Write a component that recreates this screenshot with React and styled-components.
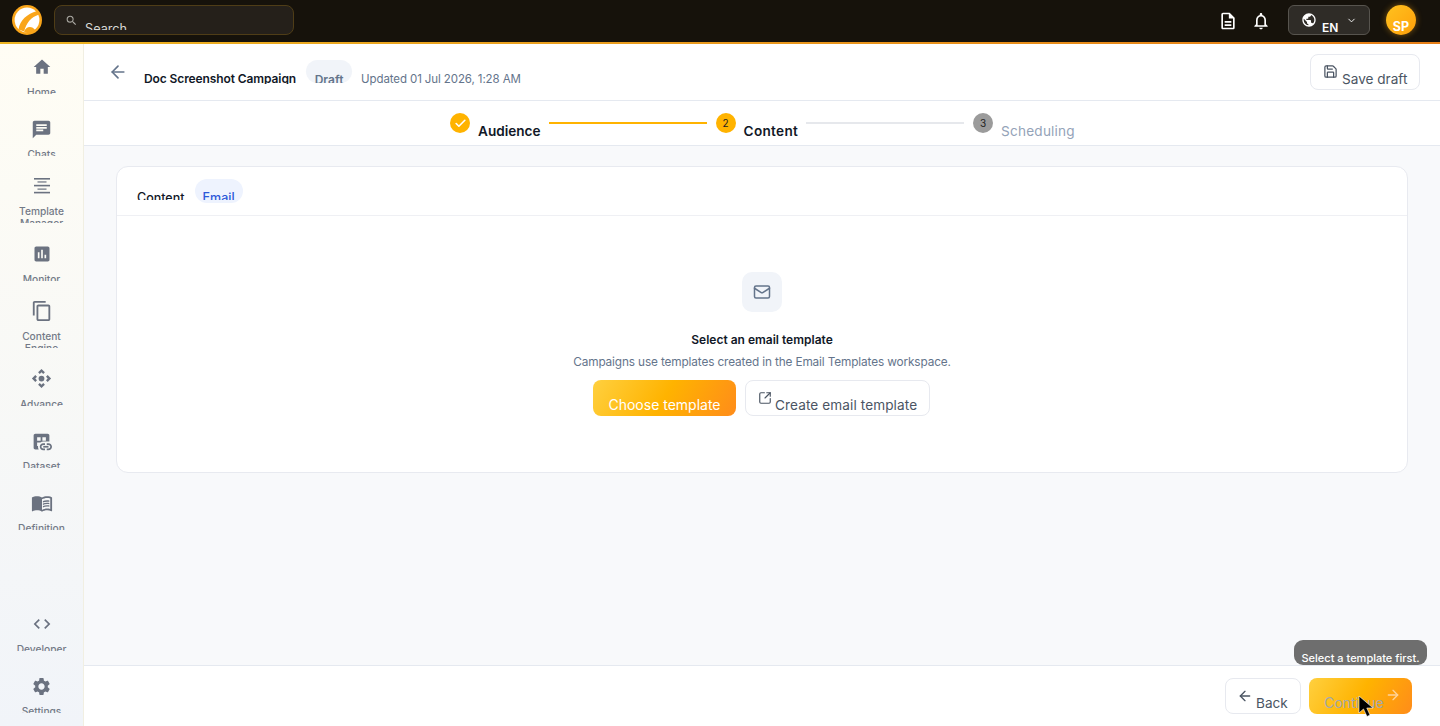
import styled, { createGlobalStyle } from 'styled-components'
import { ArrowLeft, ArrowRight, Check, ChevronDown, Mail, Save, SquareArrowOutUpRight } from 'lucide-react'
import {
  MdHome,
  MdChat,
  MdInsertChart,
  MdOutlineContentCopy,
  MdControlCamera,
  MdDatasetLinked,
  MdMenuBook,
  MdCode,
  MdSearch,
  MdSettings,
  MdOutlineDescription,
  MdOutlineNotifications,
  MdPublic
} from 'react-icons/md'

const GlobalStyle = createGlobalStyle`
  html, body {
    margin: 0;
    height: 100%;
    overflow: hidden;
    font-family: Inter, "Noto Sans", sans-serif;
    color: #111827;
    background: #f8f9fb;
  }
  * {
    box-sizing: border-box;
  }
`

const Page = styled.div`
  width: 1440px;
  height: 726px;
  display: flex;
  flex-direction: column;
  position: relative;
  overflow: hidden;
`

const TopBar = styled.header`
  height: 44px;
  flex: none;
  display: flex;
  align-items: center;
  padding: 0 24px 2px 12px;
  background: #16120b;
  border-bottom: 2px solid;
  border-image: linear-gradient(90deg, #ecb422, #e67e17) 1;
`

const LogoMark = styled.svg`
  width: 30px;
  height: 30px;
  flex: none;
`

const SearchBox = styled.div`
  width: 240px;
  height: 30px;
  margin-left: 12px;
  padding: 0 0 0 10px;
  display: flex;
  gap: 7px;
  overflow: hidden;
  border: 1px solid #4f3d17;
  border-radius: 8px;
  background: #25201a;
  color: #a8a6a0;
  svg {
    margin-top: 8px;
    flex: none;
  }
`

const SearchText = styled.span`
  height: 9px;
  margin-top: 15px;
  overflow: hidden;
  font-size: 12.7px;
  line-height: 16px;
  color: #d8d8d6;
`

const TopActions = styled.div`
  margin-left: auto;
  display: flex;
  align-items: center;
  color: #fff;
`

const TopIcon = styled.span`
  display: flex;
  width: 20px;
  margin: 1px 13px 0 0;
  justify-content: center;
`

const LangButton = styled.div`
  width: 82px;
  height: 30px;
  margin-left: 4px;
  padding: 6px 0 0 12px;
  display: flex;
  border: 1px solid #57544e;
  border-radius: 6px;
  background: #2f2c27;
  overflow: hidden;
`

const LangText = styled.span`
  margin: 8px 0 0 5px;
  font-size: 12px;
  font-weight: 600;
  line-height: 16px;
`

const LangCaret = styled(ChevronDown)`
  margin: 3px 0 0 8px;
`

const Avatar = styled.div`
  width: 30px;
  height: 30px;
  margin-left: 16px;
  padding-top: 14px;
  border-radius: 50%;
  text-align: center;
  font-size: 12.5px;
  font-weight: 700;
  line-height: 16px;
  background: linear-gradient(135deg, #ffc21f, #ff9f0a);
  box-shadow: 0 0 6px rgba(255, 170, 20, 0.45);
`

const Body = styled.div`
  flex: 1;
  min-height: 0;
  display: flex;
`

const Sidebar = styled.nav`
  width: 84px;
  flex: none;
  display: flex;
  flex-direction: column;
  justify-content: space-between;
  border-right: 1px solid #f1efe2;
  background: linear-gradient(180deg, #fffdf4, #f1f4f9);
`

const NavGroup = styled.div`
  display: flex;
  flex-direction: column;
`

const NavItem = styled.div`
  height: 62.4px;
  display: flex;
  flex-direction: column;
  align-items: center;
  justify-content: center;
  gap: 7px;
  color: #6b7280;
`

const NavIcon = styled.span`
  height: 24px;
  flex: none;
  display: flex;
  align-items: center;
  justify-content: center;
`

const NavLabel = styled.span`
  width: 64px;
  height: ${p => (p.$double ? '18px' : '8px')};
  margin-bottom: ${p => (p.$double ? '3px' : '2px')};
  overflow: hidden;
  text-align: center;
  font-size: 10.2px;
  font-weight: 500;
  color: #737a87;
  line-height: ${p => (p.$double ? '12px' : '12.5px')};
`

const Main = styled.main`
  flex: 1;
  min-width: 0;
  display: flex;
  flex-direction: column;
`

const PageHeader = styled.div`
  height: 57px;
  flex: none;
  padding: 10px 20px 0 24px;
  display: flex;
  background: #fff;
  border-bottom: 1px solid #e5e9f0;
`

const BackArrow = styled(ArrowLeft)`
  margin-top: 8px;
  color: #64748b;
`

const CampaignName = styled.span`
  margin: 16px 0 0 16px;
  height: 14px;
  overflow: hidden;
  font-size: 12px;
  font-weight: 600;
  letter-spacing: -0.1px;
  line-height: 17px;
  color: #111827;
`

const Status = styled.span`
  width: 46px;
  height: 23px;
  margin: 6px 0 0 10px;
  padding-top: 12px;
  overflow: hidden;
  text-align: center;
  border-radius: 12px;
  background: #f1f4f9;
  font-size: 12px;
  font-weight: 600;
  line-height: 16px;
  color: #64748b;
`

const Updated = styled.span`
  margin: 17px 0 0 9px;
  font-size: 11.5px;
  letter-spacing: -0.1px;
  line-height: 16px;
  color: #64748b;
`

const OutlineButton = styled.div`
  height: 36px;
  flex: none;
  display: flex;
  background: #fff;
  border: 1px solid #e7e9ef;
  border-radius: 8px;
  font-size: 13.6px;
  line-height: 18px;
  color: #4b5563;
  overflow: hidden;
`

const SaveButton = styled(OutlineButton)`
  width: 110px;
  margin-left: auto;
  padding: 9px 0 0 12px;
  gap: 4px;
`

const ButtonText = styled.span`
  margin-top: ${p => p.$top || 6}px;
  letter-spacing: ${p => p.$spacing || 0}px;
  white-space: nowrap;
`

const Stepper = styled.div`
  height: 45px;
  flex: none;
  padding: 12px 0 0 366px;
  display: flex;
  background: #fff;
  border-bottom: 1px solid #e5e9f0;
`

const StepDot = styled.span`
  width: 20px;
  height: 20px;
  flex: none;
  display: flex;
  align-items: center;
  justify-content: center;
  border-radius: 50%;
  background: ${p => p.$color};
  font-size: 10px;
  color: #222;
`

const StepLabel = styled.span`
  margin: 9px 8px 0;
  font-size: 13.6px;
  font-weight: ${p => (p.$muted ? 400 : 600)};
  letter-spacing: ${p => p.$spacing || 0}px;
  line-height: 18px;
  color: ${p => (p.$muted ? '#94a3b8' : '#111827')};
`

const StepLine = styled.span`
  width: 158px;
  height: 2px;
  margin: 9px 9px 0 0;
  background: ${p => p.$color};
`

const Content = styled.div`
  flex: 1;
  min-height: 0;
  padding: 20px 32px 0;
  background: #f8f9fb;
`

const Card = styled.section`
  height: 307px;
  background: #fff;
  border: 1px solid #e8eaf0;
  border-radius: 12px;
  overflow: hidden;
`

const TabRow = styled.div`
  height: 49px;
  padding: 12px 0 0 20px;
  display: flex;
  gap: 10px;
  border-bottom: 1px solid #eff0f4;
`

const Tab = styled.span`
  height: 24px;
  padding: 11px ${p => (p.$active ? 8 : 0)}px 0;
  border-radius: 12px;
  background: ${p => (p.$active ? '#eef3fe' : 'transparent')};
`

const TabText = styled.span`
  display: block;
  height: 10px;
  overflow: hidden;
  font-size: 12.5px;
  font-weight: 500;
  line-height: 16px;
  color: ${p => (p.$active ? '#2b59d9' : '#111827')};
`

const EmptyState = styled.div`
  padding-top: 56px;
  display: flex;
  flex-direction: column;
  align-items: center;
`

const MailBox = styled.div`
  width: 40px;
  height: 40px;
  display: flex;
  align-items: center;
  justify-content: center;
  border-radius: 10px;
  background: #f1f4f9;
  color: #64748b;
`

const EmptyTitle = styled.div`
  margin-top: 20px;
  font-size: 12px;
  font-weight: 600;
  line-height: 16px;
  color: #111827;
`

const EmptyText = styled.div`
  margin-top: 6px;
  font-size: 11.8px;
  letter-spacing: -0.13px;
  line-height: 16px;
  color: #64748b;
`

const EmptyActions = styled.div`
  margin: 10px 1px 0 0;
  display: flex;
  gap: 9px;
`

const GradientButton = styled.div`
  height: 36px;
  flex: none;
  display: flex;
  border-radius: 8px;
  background: linear-gradient(120deg, #ffd03f, #ffb300 50%, #ff8c1a);
  font-size: 14px;
  line-height: 18px;
  color: ${p => (p.$disabled ? '#a3a8ad' : '#fff')};
  overflow: hidden;
`

const ChooseButton = styled(GradientButton)`
  width: 143px;
  justify-content: center;
`

const CreateButton = styled(OutlineButton)`
  width: 185px;
  padding: 10px 0 0 12px;
  gap: 3px;
`

const Footer = styled.footer`
  height: 61px;
  flex: none;
  padding: 12px 28px 0 0;
  display: flex;
  justify-content: flex-end;
  gap: 8px;
  background: #fff;
  border-top: 1px solid #e5e9f0;
`

const BackButton = styled(OutlineButton)`
  width: 76px;
  padding: 9px 0 0 11px;
  gap: 3px;
`

const ContinueButton = styled(GradientButton)`
  width: 103px;
  padding: 9px 0 0 15px;
  gap: 1px;
  svg {
    color: #ffd39a;
  }
`

const Tooltip = styled.div`
  position: absolute;
  left: 1294px;
  top: 640px;
  width: 133px;
  height: 25px;
  padding-top: 11px;
  overflow: hidden;
  text-align: center;
  border-radius: 9px;
  background: #6e6e6e;
  font-size: 11px;
  font-weight: 500;
  line-height: 14px;
  color: #fff;
`

const Cursor = styled.svg`
  position: absolute;
  left: 1358px;
  top: 695px;
  width: 18px;
  height: 24px;
`

const Logo = () => (
  <LogoMark viewBox="0 0 30 30">
    <circle cx="15" cy="15" r="15" fill="#f9a51a" />
    <circle cx="15" cy="15" r="12.4" fill="#fff" />
    <path d="M6.5 24.5C8 15 15 9 25 6l2 3.4C19 12 14 18 12.2 26.5z" fill="#f9a51a" />
    <path d="M12 27c2-6 8-6.5 11.5-1.5-3.500 2.800-8 3.500-11.500 1.500z" fill="#f9a51a" />
  </LogoMark>
)

const TemplateIcon = () => (
  <svg width="20" height="20" viewBox="0 0 20 20" fill="currentColor">
    <rect x="2" y="2" width="16" height="1.600" />
    <rect x="5.500" y="5.200" width="9" height="1.500" opacity="0.8" />
    <rect x="2" y="8.800" width="16" height="1.600" />
    <rect x="5.500" y="12.400" width="9" height="1.500" opacity="0.8" />
    <rect x="2" y="15.800" width="16" height="1.600" />
  </svg>
)

const topNav = [
  { icon: <MdHome size={20} />, label: 'Home' },
  { icon: <MdChat size={21} />, label: 'Chats' },
  { icon: <TemplateIcon />, label: 'Template Manager', double: true },
  { icon: <MdInsertChart size={20} />, label: 'Monitor' },
  { icon: <MdOutlineContentCopy size={22} />, label: 'Content Engine', double: true },
  { icon: <MdControlCamera size={23} />, label: 'Advance' },
  { icon: <MdDatasetLinked size={21} />, label: 'Dataset' },
  { icon: <MdMenuBook size={22} />, label: 'Definition' }
]

const bottomNav = [
  { icon: <MdCode size={20} />, label: 'Developer' },
  { icon: <MdSettings size={21} />, label: 'Settings' }
]

const renderNav = items =>
  items.map(item => (
    <NavItem key={item.label}>
      <NavIcon>{item.icon}</NavIcon>
      <NavLabel $double={item.double}>{item.label}</NavLabel>
    </NavItem>
  ))

const App = () => {
  return (
    <Page>
      <GlobalStyle />
      <TopBar>
        <Logo />
        <SearchBox>
          <MdSearch size={13} />
          <SearchText>Search</SearchText>
        </SearchBox>
        <TopActions>
          <TopIcon>
            <MdOutlineDescription size={20} />
          </TopIcon>
          <TopIcon>
            <MdOutlineNotifications size={22} />
          </TopIcon>
          <LangButton>
            <MdPublic size={16} />
            <LangText>EN</LangText>
            <LangCaret size={11} />
          </LangButton>
          <Avatar>SP</Avatar>
        </TopActions>
      </TopBar>
      <Body>
        <Sidebar>
          <NavGroup>{renderNav(topNav)}</NavGroup>
          <NavGroup>{renderNav(bottomNav)}</NavGroup>
        </Sidebar>
        <Main>
          <PageHeader>
            <BackArrow size={20} />
            <CampaignName>Doc Screenshot Campaign</CampaignName>
            <Status>Draft</Status>
            <Updated>Updated 01 Jul 2026, 1:28 AM</Updated>
            <SaveButton>
              <Save size={15} />
              <ButtonText>Save draft</ButtonText>
            </SaveButton>
          </PageHeader>
          <Stepper>
            <StepDot $color="#ffb300">
              <Check size={13} color="#fff" strokeWidth={3} />
            </StepDot>
            <StepLabel>Audience</StepLabel>
            <StepLine $color="#ffb300" />
            <StepDot $color="#ffb300">2</StepDot>
            <StepLabel $spacing={0.3}>Content</StepLabel>
            <StepLine $color="#e6e8ec" />
            <StepDot $color="#9b9b9b">3</StepDot>
            <StepLabel $muted $spacing={0.2}>Scheduling</StepLabel>
          </Stepper>
          <Content>
            <Card>
              <TabRow>
                <Tab>
                  <TabText>Content</TabText>
                </Tab>
                <Tab $active>
                  <TabText $active>Email</TabText>
                </Tab>
              </TabRow>
              <EmptyState>
                <MailBox>
                  <Mail size={18} />
                </MailBox>
                <EmptyTitle>Select an email template</EmptyTitle>
                <EmptyText>Campaigns use templates created in the Email Templates workspace.</EmptyText>
                <EmptyActions>
                  <ChooseButton>
                    <ButtonText $top={16}>Choose template</ButtonText>
                  </ChooseButton>
                  <CreateButton>
                    <SquareArrowOutUpRight size={14} />
                    <ButtonText $top={5} $spacing={0.1}>Create email template</ButtonText>
                  </CreateButton>
                </EmptyActions>
              </EmptyState>
            </Card>
          </Content>
          <Footer>
            <BackButton>
              <ArrowLeft size={16} />
              <ButtonText>Back</ButtonText>
            </BackButton>
            <ContinueButton $disabled>
              <ButtonText $top={7}>Continue</ButtonText>
              <ArrowRight size={16} />
            </ContinueButton>
          </Footer>
        </Main>
      </Body>
      <Tooltip>Select a template first.</Tooltip>
      <Cursor viewBox="0 0 18 24">
        <path d="M1 1v17l4.500-4 3.500 7.500 3-1.500-3.200-7H15z" fill="#000" stroke="#fff" strokeWidth="0.6" />
      </Cursor>
    </Page>
  )
}

export default App
